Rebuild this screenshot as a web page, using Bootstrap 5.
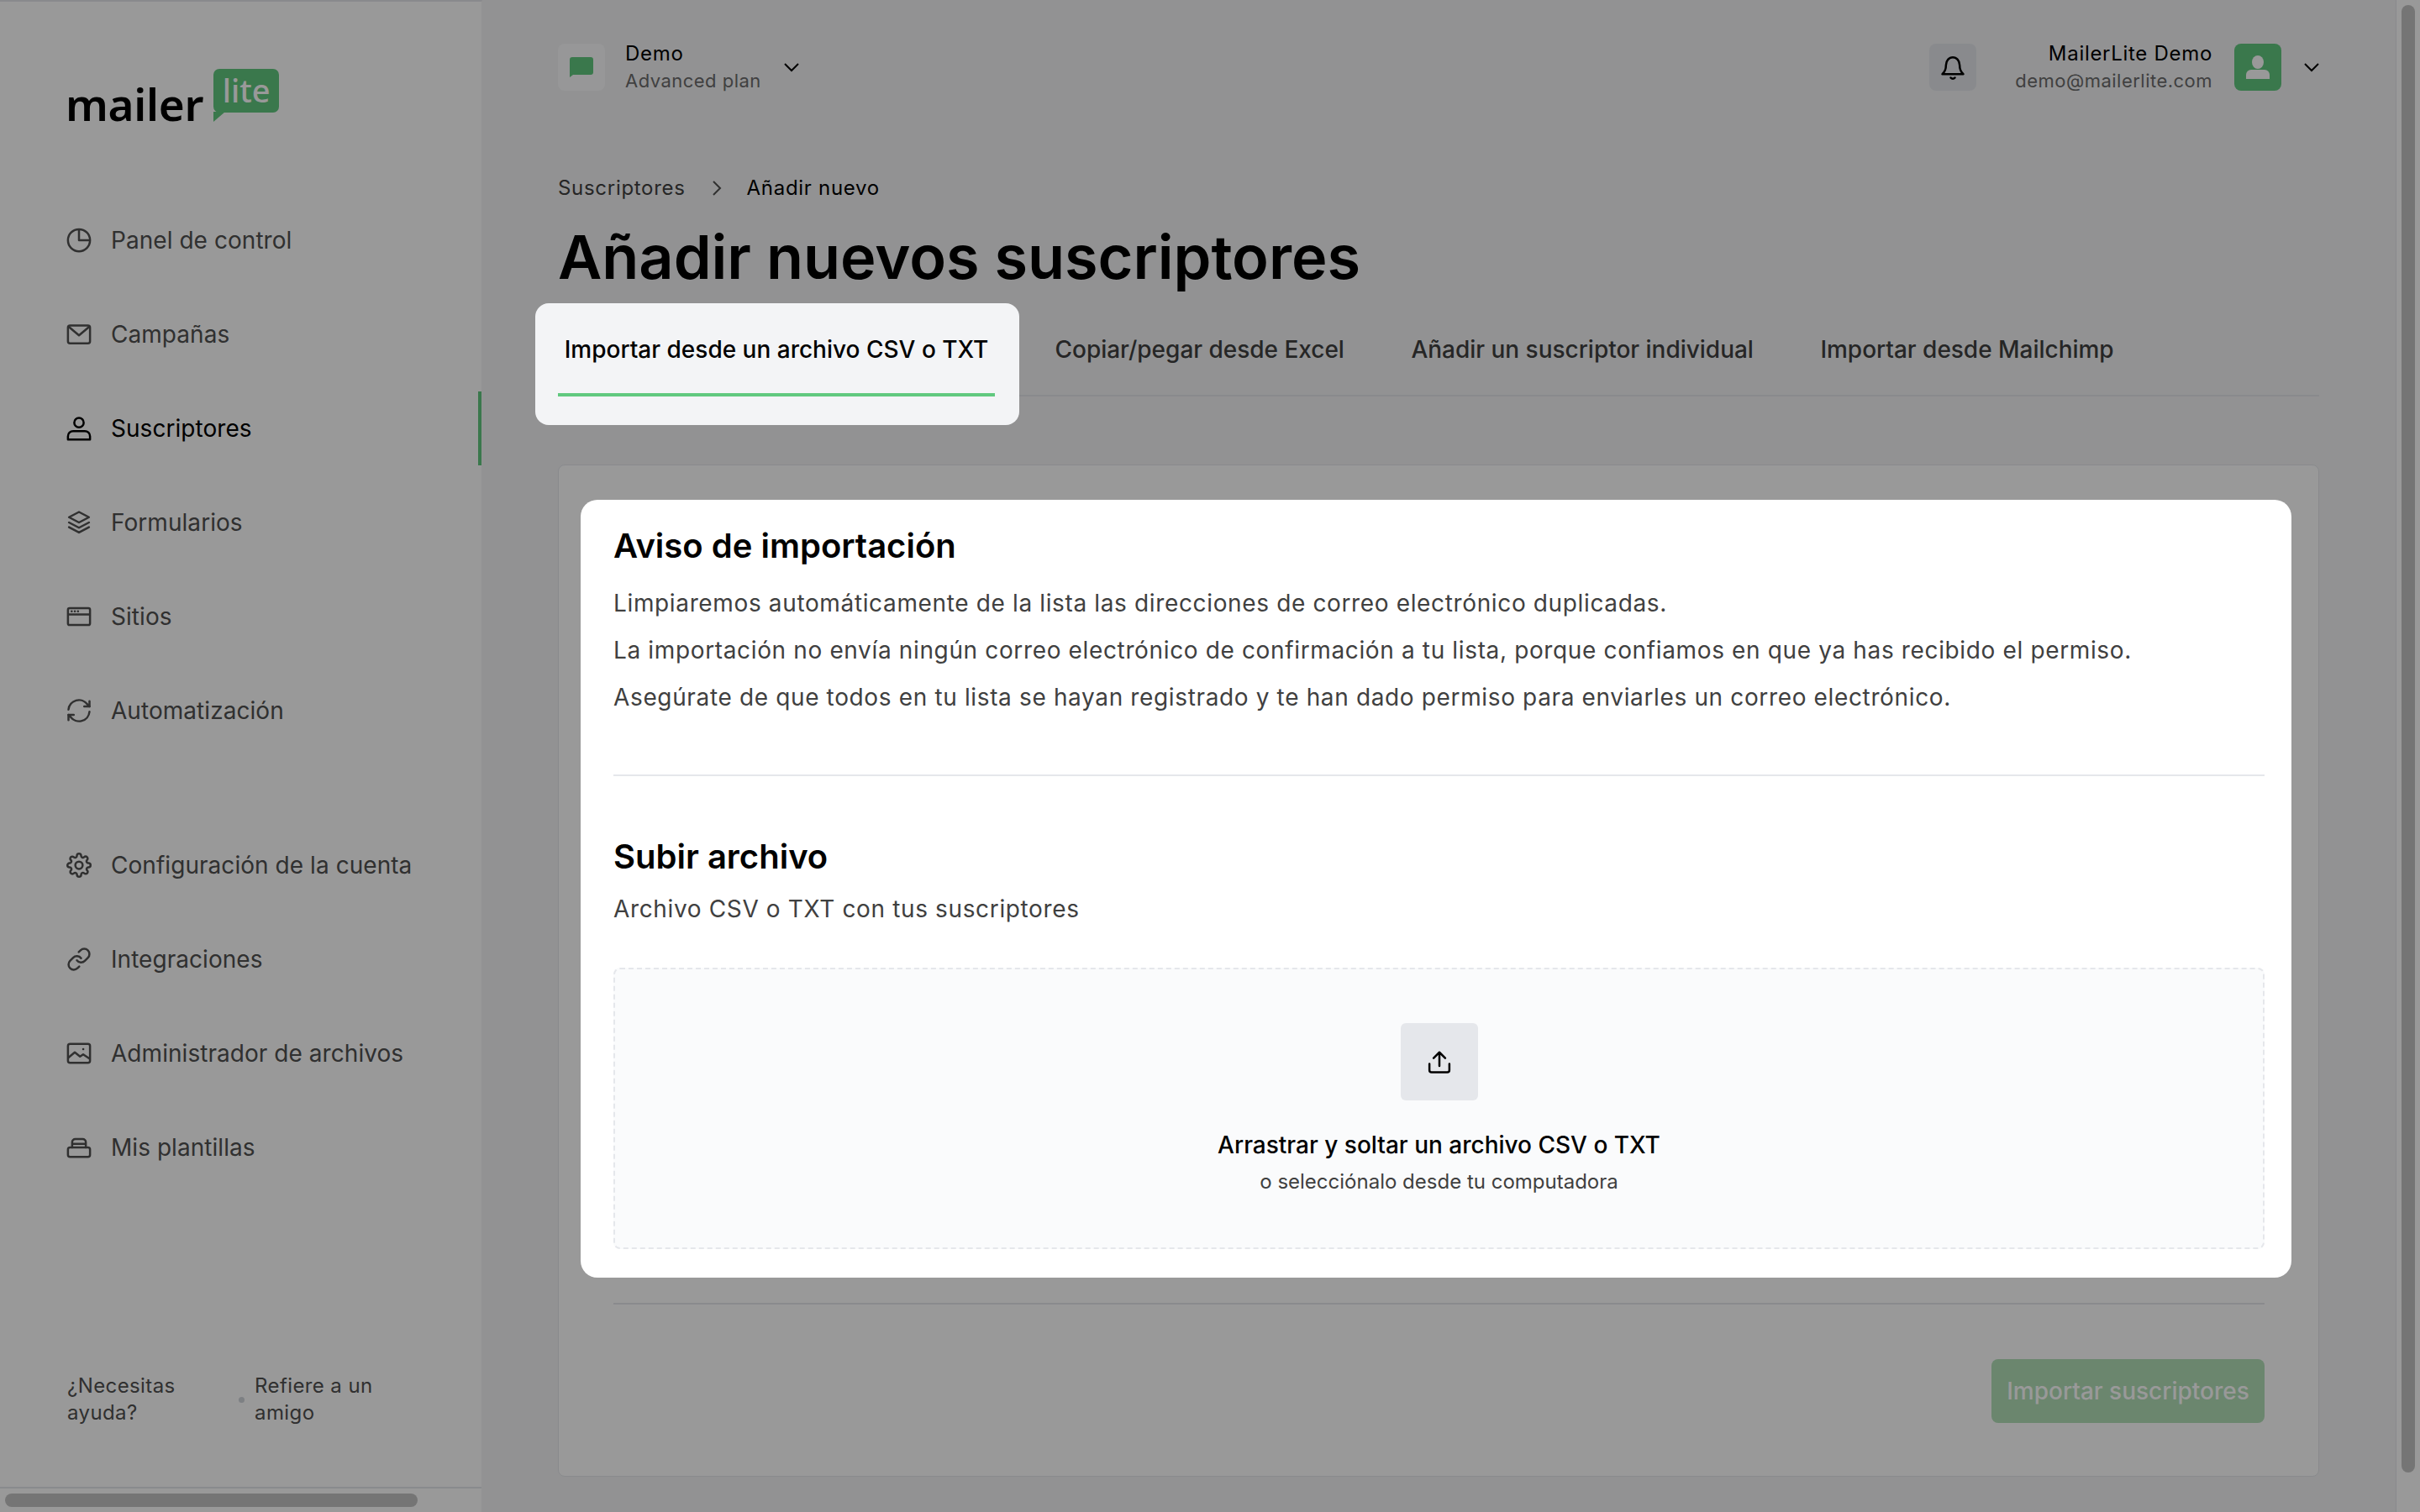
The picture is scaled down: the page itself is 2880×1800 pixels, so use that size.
<!DOCTYPE html>
<html lang="es">
<head>
  <meta charset="utf-8">
  <title>Añadir nuevos suscriptores</title>
  <link rel="stylesheet" href="https://cdn.jsdelivr.net/npm/bootstrap@5.3.0/dist/css/bootstrap.min.css">
  <style>
    html, body { height: 100%; overflow: hidden; }
    body { font-family: Inter, "Liberation Sans", sans-serif; background: #f3f4f6; color: #000; }
    svg.ico { width: 30px; height: 30px; fill: none; stroke: currentColor; stroke-width: 2; stroke-linecap: round; stroke-linejoin: round; flex: none; }

    /* dimmed backdrop of the onboarding tour */
    .tour-backdrop { position: fixed; inset: 0; background: rgba(0,0,0,.4); z-index: 10; }
    .tour-lit { position: relative; z-index: 20; }

    .app-shell { height: 100vh; }
    .side { width: 574px; flex: none; background: #fff; border-top: 2px solid #e5e7eb; border-right: 1px solid #f3f4f6; }
    .side-logo { padding: 80px 0 0 78px; height: 240px; }
    .logo-word { font-family: "Noto Sans", sans-serif; font-weight: 600; font-size: 53px; line-height: 62px; margin-top: 11px; letter-spacing: -.3px; }
    .logo-bubble { position: relative; width: 78px; height: 52px; margin-left: 12px; background: #61c97f; border-radius: 7px; color: #fff; font-family: "Noto Sans", sans-serif; font-weight: 500; font-size: 38px; line-height: 50px; text-align: center; }
    .logo-bubble::after { content: ""; position: absolute; left: 0; top: 51px; border-right: 14px solid transparent; border-top: 12px solid #61c97f; }

    .side-nav { list-style: none; margin: 0; padding: 0; }
    .side-nav a { display: flex; align-items: center; gap: 23px; height: 88px; margin-bottom: 24px; padding-left: 79px; color: #505050; text-decoration: none; font-size: 28px; letter-spacing: .05px; }
    .side-nav a.on { color: #000; box-shadow: inset -4px 0 0 #61c97f; }
    .side-nav.lower { margin-top: 72px; }
    .side-foot { font-size: 24px; line-height: 32px; color: #505050; padding: 0 60px 0 80px; height: 208px; letter-spacing: .4px; }
    .foot-need { width: 188px; margin-right: 16px; flex: none; }
    .foot-dot { width: 7px; height: 7px; border-radius: 50%; background: #d1d5db; flex: none; margin-right: 12px; }
    .hbar { height: 30px; flex: none; background: #fff; border-top: 2px solid #e5e7eb; padding: 6px; }
    .hbar div { width: 491px; height: 16px; border-radius: 8px; background: #c4c4c4; }

    .main-col { flex: 1 1 auto; min-width: 0; padding: 0 91px 0 90px; }
    .topbar { height: 160px; }
    .top-tile { width: 56px; height: 56px; border-radius: 8px; flex: none; }
    .tile-soft { background: #fcfcfd; }
    .tile-grey { background: #e5e7eb; }
    .tile-green { background: #61c97f; margin-left: 26px; }
    .top-name { font-size: 24px; line-height: 32px; letter-spacing: .7px; }
    .top-sub { font-size: 22px; line-height: 32px; color: #6b6b6b; letter-spacing: .48px; }
    .top-chev { margin-left: 27px; flex: none; }
    .top-user { margin-left: 46px; }
    .crumbs { font-size: 24px; line-height: 32px; margin-top: 48px; color: #404040; letter-spacing: .7px; }
    .crumb-sep { margin: 0 30px 0 31px; }
    .page-title { font-size: 72px; font-weight: 600; line-height: 84px; margin: 24px 0 0; color: #000; letter-spacing: -.04px; }

    .tabs-row { border-bottom: 2px solid #e5e7eb; height: 94px; gap: 63.500px; margin-top: 30px; }
    .tab-item { padding: 21px 8px 0; font-size: 28px; color: #404040; line-height: 34px; font-weight: 500; letter-spacing: -.02px; }
    .tab-spot { background: #f3f4f6; margin: -17px -29px 0 -27px; height: 145px; width: 576px; padding: 17px 29px 0 27px; border-radius: 16px; flex: none; }
    .tab-spot div { height: 94px; padding-top: 21px; text-align: center; color: #000; font-size: 28px; line-height: 34px; font-weight: 500; border-bottom: 4px solid #61c97f; }

    .imp-card { background: #fff; border: 1px solid #e5e7eb; border-radius: 8px; margin-top: 81px; height: 1205px; padding: 41px 64px 0 65px; }
    .spot-panel { background: #fff; border-radius: 20px; margin: 0 -32px 0 -39px; padding: 0 32px 34px 39px; height: 926px; }
    .panel-h { font-size: 40px; font-weight: 600; line-height: 56px; margin: 0; color: #000; }
    .panel-h.first { padding-top: 27px; margin-bottom: 12px; }
    .panel-h.second { margin-bottom: 6px; }
    .panel-p { font-size: 28px; line-height: 56px; color: #404040; margin: 0; letter-spacing: .64px; }
    .panel-rule { border-top: 2px solid #e5e7eb; margin: 64px 0 68px; opacity: 1; }
    .drop-zone { background: #fafbfc; border: 2px dashed #e5e7eb; border-radius: 8px; height: 335px; margin-top: 42px; padding-top: 64px; }
    .up-tile { width: 92px; height: 92px; border-radius: 6px; background: #e5e7eb; }
    .drop-main { font-size: 28px; line-height: 36px; font-weight: 500; color: #000; margin-top: 35px; }
    .drop-sub { font-size: 24px; line-height: 32px; color: #404040; margin-top: 10px; }
    .card-rule { border-top: 2px solid #e5e7eb; margin: 30px 0 0; opacity: 1; }
    .import-btn, .import-btn:disabled { background: #b2dfb8; border: 0; color: #fff; font-size: 28px; width: 325px; height: 76px; border-radius: 8px; margin-top: 65px; font-weight: 500; opacity: 1; }

    .vbar { width: 29px; flex: none; background: #fff; border-left: 1px solid #e5e7eb; padding: 6px 6px 47px; }
    .vbar div { height: 100%; border-radius: 8px; background: #c4c4c4; }
  </style>
</head>
<body>
  <div class="tour-backdrop"></div>
  <div class="app-shell d-flex">

    <aside class="side d-flex flex-column">
      <div class="side-logo d-flex align-items-start">
        <div class="logo-word">mailer</div>
        <div class="logo-bubble">lite</div>
      </div>

      <ul class="side-nav">
        <li><a href="#"><svg class="ico" viewBox="0 0 24 24"><circle cx="12" cy="12" r="10.5"/><path d="M12 2v10h10"/></svg>Panel de control</a></li>
        <li><a href="#"><svg class="ico" viewBox="0 0 24 24"><rect x="1.5" y="3.500" width="21" height="17" rx="2"/><path d="M2.500 5l9.500 8 9.500-8"/></svg>Campañas</a></li>
        <li><a href="#" class="on"><svg class="ico" viewBox="0 0 24 24"><circle cx="12" cy="6.500" r="4.500"/><path d="M1.500 22.500v-3a5 5 0 0 1 5-5h11a5 5 0 0 1 5 5v3z"/></svg>Suscriptores</a></li>
        <li><a href="#"><svg class="ico" viewBox="0 0 24 24"><path d="M12 2l9.500 5-9.500 5-9.500-5zM2.500 12l9.500 5 9.500-5M2.500 16.500l9.500 5 9.500-5"/></svg>Formularios</a></li>
        <li><a href="#"><svg class="ico" viewBox="0 0 24 24"><rect x="1.500" y="4" width="21" height="16" rx="1.500"/><path d="M2 10h20M5 7h.1M8 7h.1M11 7h.1"/></svg>Sitios</a></li>
        <li><a href="#"><svg class="ico" viewBox="0 0 24 24"><path d="M2 11a10 10 0 0 1 18-5l2 2M22 13a10 10 0 0 1-18 5l-2-2"/><path d="M22 3v5h-5M2 21v-5h5"/></svg>Automatización</a></li>
      </ul>

      <ul class="side-nav lower flex-grow-1">
        <li><a href="#"><svg class="ico" viewBox="0 0 24 24"><circle cx="12" cy="12" r="3.500"/><path d="M19.400 15a1.650 1.650 0 0 0 .33 1.820l.06.06a2 2 0 0 1 0 2.830 2 2 0 0 1-2.830 0l-.06-.06a1.650 1.650 0 0 0-1.820-.33 1.650 1.650 0 0 0-1 1.510V21a2 2 0 0 1-2 2 2 2 0 0 1-2-2v-.09A1.650 1.650 0 0 0 9 19.400a1.650 1.650 0 0 0-1.820.33l-.06.06a2 2 0 0 1-2.830 0 2 2 0 0 1 0-2.830l.06-.06a1.650 1.650 0 0 0 .33-1.820 1.650 1.650 0 0 0-1.510-1H3a2 2 0 0 1-2-2 2 2 0 0 1 2-2h.09A1.650 1.650 0 0 0 4.600 9a1.650 1.650 0 0 0-.33-1.820l-.06-.06a2 2 0 0 1 0-2.830 2 2 0 0 1 2.830 0l.06.06a1.650 1.650 0 0 0 1.820.33H9a1.650 1.650 0 0 0 1-1.510V3a2 2 0 0 1 2-2 2 2 0 0 1 2 2v.09a1.650 1.650 0 0 0 1 1.510 1.650 1.650 0 0 0 1.820-.33l.06-.06a2 2 0 0 1 2.830 0 2 2 0 0 1 0 2.830l-.06.06a1.650 1.650 0 0 0-.33 1.820V9a1.650 1.650 0 0 0 1.510 1H21a2 2 0 0 1 2 2 2 2 0 0 1-2 2h-.09a1.650 1.650 0 0 0-1.510 1z"/></svg>Configuración de la cuenta</a></li>
        <li><a href="#"><svg class="ico" viewBox="0 0 24 24"><path d="M10 13a5 5 0 0 0 7.540.54l3-3a5 5 0 0 0-7.070-7.070l-1.720 1.710"/><path d="M14 11a5 5 0 0 0-7.540-.54l-3 3a5 5 0 0 0 7.070 7.070l1.710-1.710"/></svg>Integraciones</a></li>
        <li><a href="#"><svg class="ico" viewBox="0 0 24 24"><rect x="1.500" y="3" width="21" height="18" rx="2"/><path d="M2 16l6-5 5 4 3-2 6 4M16 8h.1"/></svg>Administrador de archivos</a></li>
        <li><a href="#"><svg class="ico" viewBox="0 0 24 24"><rect x="1.500" y="12" width="21" height="9" rx="2"/><path d="M5.500 12V7a3 3 0 0 1 3-3h7a3 3 0 0 1 3 3v5M5.500 8.500h13"/></svg>Mis plantillas</a></li>
      </ul>

      <div class="side-foot d-flex align-items-center">
        <span class="foot-need">¿Necesitas ayuda?</span>
        <span class="foot-dot"></span>
        <span>Refiere a un amigo</span>
      </div>
      <div class="hbar"><div></div></div>
    </aside>

    <main class="main-col">
      <header class="topbar d-flex align-items-center">
        <div class="top-tile tile-soft d-flex align-items-center justify-content-center">
          <svg width="28" height="24" viewBox="0 0 28 24"><path d="M3 0h22a3 3 0 0 1 3 3v15a3 3 0 0 1-3 3H4l-4 3V3a3 3 0 0 1 3-3z" fill="#61c97f"/></svg>
        </div>
        <div class="ms-4">
          <div class="top-name">Demo</div>
          <div class="top-sub">Advanced plan</div>
        </div>
        <svg class="top-chev" width="18" height="11" viewBox="0 0 18 11" fill="none" stroke="#000" stroke-width="2"><path d="M1 1l8 8 8-8"/></svg>

        <div class="top-tile tile-grey ms-auto d-flex align-items-center justify-content-center">
          <svg class="ico" viewBox="0 0 24 24"><path d="M2 18.500c2.500-2 3.500-4 3.500-8.500a6.500 7.500 0 0 1 13 0c0 4.500 1 6.500 3.500 8.500zM10 22c1 1.200 3 1.200 4 0"/></svg>
        </div>
        <div class="text-end top-user">
          <div class="top-name">MailerLite Demo</div>
          <div class="top-sub">demo@mailerlite.com</div>
        </div>
        <div class="top-tile tile-green d-flex align-items-center justify-content-center">
          <svg width="28" height="28" viewBox="0 0 28 28" fill="#fff"><ellipse cx="14" cy="8" rx="7" ry="8"/><path d="M0 28v-5a6 6 0 0 1 6-6h16a6 6 0 0 1 6 6v5z"/></svg>
        </div>
        <svg class="top-chev" width="18" height="11" viewBox="0 0 18 11" fill="none" stroke="#000" stroke-width="2"><path d="M1 1l8 8 8-8"/></svg>
      </header>

      <div class="crumbs d-flex align-items-center">
        <span>Suscriptores</span>
        <svg class="crumb-sep" width="12" height="20" viewBox="0 0 12 20" fill="none" stroke="#505050" stroke-width="2"><path d="M2 2l8 8-8 8"/></svg>
        <span class="text-black">Añadir nuevo</span>
      </div>
      <h1 class="page-title">Añadir nuevos suscriptores</h1>

      <nav class="tabs-row d-flex">
        <div class="tab-spot tour-lit"><div>Importar desde un archivo CSV o TXT</div></div>
        <div class="tab-item">Copiar/pegar desde Excel</div>
        <div class="tab-item">Añadir un suscriptor individual</div>
        <div class="tab-item">Importar desde Mailchimp</div>
      </nav>

      <section class="imp-card">
        <div class="spot-panel tour-lit">
          <h2 class="panel-h first">Aviso de importación</h2>
          <p class="panel-p">Limpiaremos automáticamente de la lista las direcciones de correo electrónico duplicadas.</p>
          <p class="panel-p">La importación no envía ningún correo electrónico de confirmación a tu lista, porque confiamos en que ya has recibido el permiso.</p>
          <p class="panel-p">Asegúrate de que todos en tu lista se hayan registrado y te han dado permiso para enviarles un correo electrónico.</p>
          <hr class="panel-rule">
          <h2 class="panel-h second">Subir archivo</h2>
          <p class="panel-p">Archivo CSV o TXT con tus suscriptores</p>
          <div class="drop-zone text-center">
            <div class="up-tile d-inline-flex align-items-center justify-content-center">
              <svg class="ico" viewBox="0 0 24 24"><path d="M12 16V3M6.500 8.500L12 3l5.500 5.500M2.500 14v6a2 2 0 0 0 2 2h15a2 2 0 0 0 2-2v-6"/></svg>
            </div>
            <div class="drop-main">Arrastrar y soltar un archivo CSV o TXT</div>
            <div class="drop-sub">o selecciónalo desde tu computadora</div>
          </div>
        </div>
        <hr class="card-rule">
        <div class="d-flex justify-content-end">
          <button class="btn import-btn p-0" disabled>Importar suscriptores</button>
        </div>
      </section>
    </main>

    <div class="vbar"><div></div></div>
  </div>
  <script src="https://cdn.jsdelivr.net/npm/bootstrap@5.3.0/dist/js/bootstrap.bundle.min.js"></script>
</body>
</html>
